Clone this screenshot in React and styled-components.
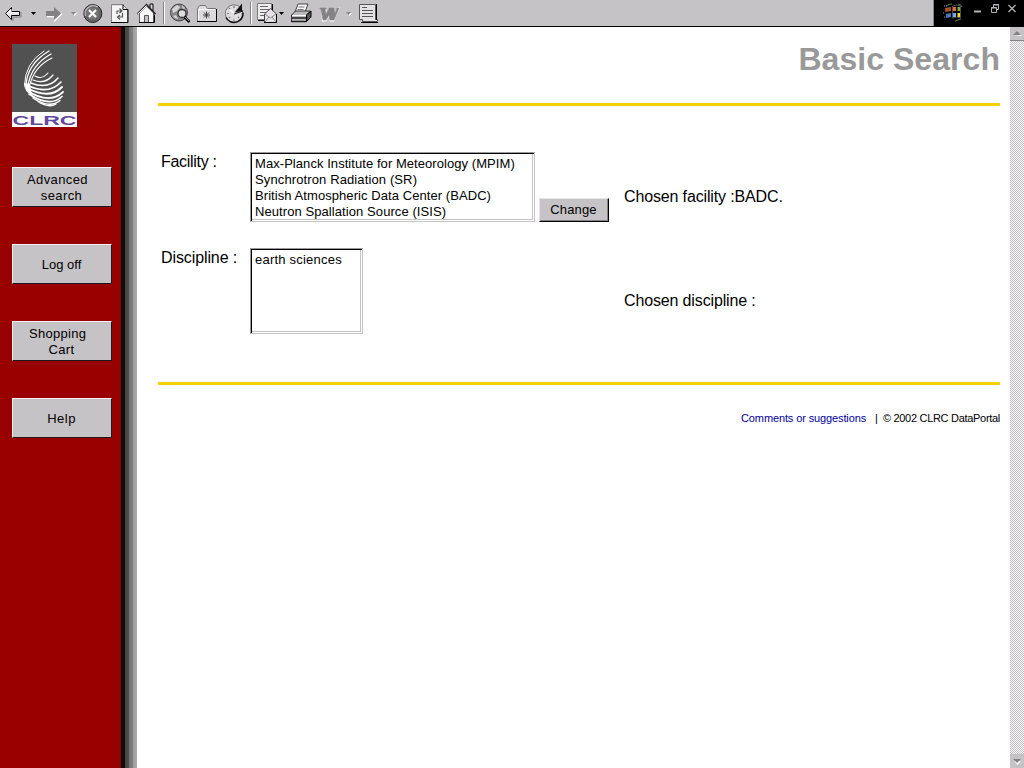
import React from "react";
import styled, { createGlobalStyle } from "styled-components";

const Global = createGlobalStyle`
  * { box-sizing: border-box; }
  body {
    margin: 0;
    background: #fff;
    color: #000;
    overflow: hidden;
    font-family: "Liberation Sans", Arial, sans-serif;
  }
`;

const Screen = styled.div`
  width: 1024px;
  height: 768px;
  display: flex;
  flex-direction: column;
`;

const Toolbar = styled.header`
  height: 27px;
  flex: none;
  display: flex;
  background: #c6c3c6;
  border-bottom: 1px solid #000;
`;

const Glyph = styled.svg`
  display: block;
  flex: none;
  height: 26px;
`;

const WindowControls = styled.div`
  width: 91px;
  height: 26px;
  margin-left: auto;
  background: #000;
  border-left: 1px solid #848284;
`;

const Body = styled.div`
  flex: 1;
  min-height: 0;
  display: flex;
`;

const Sidebar = styled.nav`
  width: 137px;
  flex: none;
  padding: 17px 0 0 12px;
  background: linear-gradient(
    to right,
    #990000 120px, #6a0000 121px,
    #100c08 121px, #100c08 125px,
    #444 125px, #505050 129px,
    #747474 129px, #808080 133px,
    #9c9c9c 133px, #adadad 137px
  );
`;

const Logo = styled.svg`
  display: block;
  width: 65px;
  height: 83px;
  margin-bottom: 40px;
`;

const NavButton = styled.button`
  display: flex;
  flex-direction: column;
  justify-content: center;
  align-items: center;
  width: 100px;
  height: 40px;
  margin: 0 0 37px;
  padding: 1px 1px 0 0;
  border: 1px solid;
  border-color: #f4f0f0 #201818 #201818 #f4f0f0;
  border-radius: 0;
  background: #c6c3c6;
  color: #000;
  font: 13px/16px "Liberation Sans", Arial, sans-serif;
  letter-spacing: ${(p) => p.$track || 0}px;
`;

const NavLine = styled.span`
  white-space: pre;
`;

const Main = styled.main`
  flex: 1;
  padding: 11px 10px 0 21px;
`;

const Title = styled.h1`
  margin: 0;
  height: 65px;
  text-align: right;
  color: #999;
  font-size: 32px;
  line-height: 42px;
  font-weight: bold;
  letter-spacing: ${(p) => p.$track}px;
`;

const Rule = styled.hr`
  margin: 0;
  height: 3px;
  border: 0;
  background: #f7d000;
`;

const SearchForm = styled.form`
  display: grid;
  grid-template-columns: 92px 374px 1fr;
  grid-template-rows: 96px 133px;
  padding-top: 46px;
  height: 276px;
`;

const Label = styled.label`
  padding-left: 3px;
  font-size: 16px;
  line-height: 20px;
  letter-spacing: ${(p) => p.$track}px;
`;

const Field = styled.div`
  display: flex;
  align-items: flex-end;
  align-self: start;
  gap: 4px;
`;

const ListBox = styled.ul`
  margin: 0;
  padding: 3px 0 0 4px;
  list-style: none;
  width: ${(p) => p.$w}px;
  height: ${(p) => p.$h}px;
  border: 1px solid;
  border-color: #9c9a9c #c6c3c6 #c6c3c6 #9c9a9c;
  box-shadow: inset 1px 1px 0 #000, inset -1px -1px 0 #fff, inset -2px -2px 0 #c6c3c6;
`;

const Option = styled.li`
  font-size: 13px;
  line-height: 16px;
  white-space: nowrap;
  letter-spacing: ${(p) => p.$track}px;
`;

const ChangeButton = styled.button`
  width: 70px;
  height: 24px;
  padding: 0 1px 1px 0;
  border: 1px solid;
  border-color: #e7e4e7 #000 #000 #e7e4e7;
  border-radius: 0;
  box-shadow: inset -1px -1px 0 #848284;
  background: #c6c3c6;
  color: #000;
  font: 13px/16px "Liberation Sans", Arial, sans-serif;
  letter-spacing: 0.15px;
`;

const Chosen = styled.p`
  margin: ${(p) => p.$top}px 0 0;
  font-size: 16px;
  line-height: 20px;
  white-space: nowrap;
  letter-spacing: ${(p) => p.$track}px;
`;

const Footer = styled.footer`
  display: flex;
  justify-content: flex-end;
  align-items: center;
  padding-top: 26px;
  font-size: 11px;
  line-height: 15px;
  white-space: pre;
`;

const FooterLink = styled.a`
  color: #00009c;
  letter-spacing: -0.12px;
`;

const Bar = styled.span`
  margin: 0 5px 0 9px;
`;

const Copyright = styled.span`
  letter-spacing: -0.3px;
`;

const ScrollBar = styled.div`
  width: 14px;
  flex: none;
  display: flex;
  flex-direction: column;
  justify-content: space-between;
  background: repeating-conic-gradient(#c0bec0 0 25%, #fff 0 50%) 0 0 / 2px 2px;
`;

const ScrollButton = styled.svg`
  display: block;
  width: 14px;
  height: 14px;
  background: #c6c3c6;
`;

function Icon({ x, w, children }) {
  return (
    <Glyph width={w} viewBox={`${x} 0 ${w} 26`}>
      {children}
    </Glyph>
  );
}

function Caret({ x, w, at, muted }) {
  return (
    <Icon x={x} w={w}>
      {muted && <path d={`M${at + 1} 13h5l-2.5 3z`} fill="#fff" />}
      <path d={`M${at} 12h5l-2.5 3z`} fill={muted ? "#848284" : "#000"} />
    </Icon>
  );
}

function Divider({ x, w, at }) {
  return (
    <Icon x={x} w={w}>
      <path d={`M${at + 0.5} 2v22`} stroke="#848284" />
      <path d={`M${at + 1.5} 2v22`} stroke="#fff" />
    </Icon>
  );
}

function ToolbarIcons() {
  return (
    <>
      <Icon x={0} w={24}>
        <path d="M6 14l7 7v-4h8v-5" fill="none" stroke="#848284" />
        <path d="M5.500 13.500l6-6v4h8v4h-8v4z" fill="#e7e4e7" stroke="#000" />
        <path d="M7 13.500l4-4v3h8" fill="none" stroke="#fff" />
      </Icon>
      <Caret x={24} w={18} at={31} />
      <Icon x={42} w={24}>
        <path d="M47 16.500h8v4l7-7" fill="none" stroke="#fff" strokeWidth="1.500" />
        <path d="M46 11h8V7l7 6.500-7 6.500v-4h-8z" fill="#848284" />
      </Icon>
      <Caret x={66} w={14} at={71} muted />
      <Icon x={80} w={26}>
        <circle cx="92.800" cy="13.500" r="9" fill="#666" stroke="#222" />
        <path d="M85.500 16a8 8 0 0 1 12-9" fill="none" stroke="#b5b2b5" strokeWidth="1.500" />
        <circle cx="92.500" cy="13.500" r="6" fill="#777" />
        <path d="M89 10l7 7m0-7l-7 7" stroke="#fff" strokeWidth="2" />
      </Icon>
      <Icon x={106} w={28}>
        <path d="M112 5.500h11l5 5v12h-16z" fill="#f4f4f4" />
        <path d="M111.500 22V4.500h11l5 5V22" fill="none" stroke="#848284" />
        <path d="M111 22.500h17v-13h-5v-5" fill="none" stroke="#000" />
        <path d="M117 14v-3h4m-1.500-2.500l2.500 2.500-2.500 2M122.500 13v4h-4m1.500-2l-2.500 2 2.500 2.500" fill="none" stroke="#555" strokeWidth="1.200" />
      </Icon>
      <Icon x={134} w={26}>
        <path d="M150 8V4h3v7" fill="#ddd" stroke="#000" />
        <path d="M139.500 13v9.500h14V13l-7-7z" fill="#f7f7f7" stroke="#555" />
        <path d="M137.500 14l9-9.500 9 9.500" fill="none" stroke="#222" strokeWidth="1.500" />
        <path d="M138 14l8.500-8.500" stroke="#fff" />
        <path d="M144.500 22v-6.500h4V22" fill="#c6c3c6" stroke="#555" />
        <path d="M139 22.500h15.500v-8" fill="none" stroke="#000" />
      </Icon>
      <Divider x={160} w={8} at={163} />
      <Icon x={168} w={26}>
        <circle cx="179" cy="12.500" r="8.500" fill="#888" stroke="#444" />
        <path d="M172 9l5-4 3 2-3 4-4 2zM173 16l3-1 2 4-3-1zM182 5l3 3-2 2z" fill="#d6d4d6" />
        <circle cx="182" cy="13.500" r="4" fill="#ddd" stroke="#333" strokeWidth="1.300" />
        <path d="M184.500 17l5 5" stroke="#000" strokeWidth="2.500" />
        <path d="M185 17l4 4" stroke="#aaa" />
      </Icon>
      <Icon x={194} w={26}>
        <path d="M198 21V8l2-3h6l2 3h8v13z" fill="#dcdadc" />
        <path d="M197.500 21V8.500l2-3h6l2 3H216" fill="none" stroke="#777" />
        <path d="M198.500 20V9.500H215" fill="none" stroke="#fff" />
        <path d="M197 21.500h19.500V9" fill="none" stroke="#000" />
        <path d="M206.500 11.500v7m-3.500-3.500h7m-6-2.500l5 5m0-5l-5 5" stroke="#333" strokeWidth=".9" />
      </Icon>
      <Icon x={220} w={30}>
        <circle cx="234" cy="13.500" r="8.700" fill="#dedcde" stroke="#777" />
        <path d="M226 17.500a9 9 0 0 0 17-5" fill="none" stroke="#111" strokeWidth="1.500" />
        <path d="M234.500 12.500l7.500-9v7.500z" fill="#111" />
        <path d="M234 14l9-3" stroke="#000" />
        <path d="M234 6v2m-7 5.500h2m5 6v2m7-7.500h1m-13-6l1 1m-1 9l1-1m8 0l1 1" stroke="#777" strokeWidth="1.200" />
        <path d="M234 13.500l-4-4" stroke="#fff" strokeWidth="1.500" />
      </Icon>
      <Divider x={250} w={4} at={250} />
      <Icon x={254} w={25}>
        <path d="M257.500 3.500h14v16h-14z" fill="#eee" stroke="#777" />
        <path d="M272.500 4v7M258 20.500h8" stroke="#000" />
        <path d="M260 6.500h8m-8 3h9m-9 3h6m-6 3h4" stroke="#666" />
        <path d="M264.500 14l6-5.500 6 5.500v8.500h-12z" fill="#e4e2e4" stroke="#444" />
        <path d="M265 14l5.500 4 5.500-4M265 22l4-5m7 5l-4-5" fill="none" stroke="#888" />
        <path d="M264 22.500h12.500V14" fill="none" stroke="#000" />
      </Icon>
      <Caret x={279} w={9} at={279} />
      <Icon x={288} w={28}>
        <path d="M295 12l3-8h10l-3 8z" fill="#f7f7f7" stroke="#444" />
        <path d="M298.500 7h6m-7 2.500h6" stroke="#777" />
        <path d="M291.500 15l4-4h15l-4 4v6.500h-15z" fill="#bbb" stroke="#333" />
        <path d="M306.500 15l4.500-4v6l-4.500 4.500z" fill="#555" stroke="#000" />
        <path d="M292 15.500h14" stroke="#fff" />
        <path d="M292 18h14m-15 3.500h15" stroke="#222" strokeWidth="1.500" />
      </Icon>
      <Icon x={316} w={26}>
        <path d="M321 8.500h5l1 6 3-6h4l1 6 3-6h-1v-1h3l-6 14h-4l-1-5-3 5h-4z" fill="#fff" />
        <path d="M320 8h6v1h-1l1 5 3-5v-1h5v1l1 5 2-5V8h2l-5 12h-4l-1-5-3 5h-3l-2-11h-1z" fill="#848284" stroke="#848284" strokeWidth=".6" />
      </Icon>
      <Caret x={342} w={12} at={346} muted />
      <Icon x={354} w={28}>
        <path d="M359.500 4.500h16v15h2v2h-15v-2h-3z" fill="#e4e2e4" stroke="#555" />
        <path d="M361 22.500h17M376.500 4v16" stroke="#000" />
        <path d="M362 7.500h5m-5 3h11m-11 3h11m-11 3h11" stroke="#555" />
      </Icon>
    </>
  );
}

function SystemIcons() {
  return (
    <svg width="90" height="26" viewBox="934 0 90 26">
      <path d="M944 6h3m-2 3h2m-4 4h2m-1 4h4" stroke="#3d6c96" strokeWidth="1.500" strokeDasharray="1 1" />
      <path d="M946 6q3-2 6-2m6 0q3 0 4 3m-1 12l-6 2" fill="none" stroke="#5c7b4c" />
      <path d="M952.500 6q4-2 8 0v12q-4-2-8 0z" fill="#000" stroke="#4d5148" />
      <path d="M945 8l6-1v4l-6 1z" fill="#a8502e" />
      <path d="M953 7h3v4h-3z" fill="#e66b38" />
      <path d="M957.500 7h2.500v4h-2.500z" fill="#74b33d" />
      <path d="M946 14l5-1v4l-5 1z" fill="#4b77bd" />
      <path d="M953 13h3v4h-3z" fill="#74a9e9" />
      <path d="M957.500 13h2.500v4h-2.500z" fill="#f4df32" />
      <path d="M974 11.500h7" stroke="#b5b2b5" strokeWidth="2" />
      <path d="M993.500 7V4.500h5v5H996M991.500 7.500h5v5h-5z" fill="none" stroke="#b5b2b5" />
      <path d="M993 5h6M991 8h6" stroke="#b5b2b5" />
      <path d="M1008.500 5l7 7m0-7l-7 7" stroke="#b5b2b5" strokeWidth="1.300" />
    </svg>
  );
}

function ClrcLogo() {
  return (
    <Logo viewBox="0 0 65 83">
      <path d="M0 0h65v68H0z" fill="#525152" />
      <path d="M0 68h65v15H0z" fill="#fff" />
      <g fill="none" stroke="#fff" strokeLinecap="round">
        <path d="M32 7Q13 19 12.500 41" strokeWidth="1" />
        <path d="M37 7Q15 20 14 42" strokeWidth="1.300" />
        <path d="M39 10Q19 21 16 42" strokeWidth="1.300" />
        <path d="M40 14Q23 22 18 40" strokeWidth="1.100" />
        <path d="M23 32Q30 36 36 29" strokeWidth="1.100" />
        <path d="M21 36Q33 41 41 31" strokeWidth="1.300" />
        <path d="M19 39Q36 46 46 34" strokeWidth="1.500" />
        <path d="M17 42Q37 51 49 38" strokeWidth="1.700" />
        <path d="M15 44Q38 56 50 43" strokeWidth="1.900" />
        <path d="M15 46.500Q37 61 51 48" strokeWidth="1.900" />
        <path d="M17 50Q38 64 50 52.500" strokeWidth="1.700" />
        <path d="M21 54Q37 65 48 56.500" strokeWidth="1.500" />
        <path d="M26 57.500Q37 64.500 44 60" strokeWidth="1.300" />
      </g>
      <path d="M12 39l6 1 2 12q-8-5-8-13z" fill="#fff" />
      <text
        x="0.500"
        y="80.500"
        fontFamily="Liberation Sans, Arial, sans-serif"
        fontSize="13.500"
        fontWeight="bold"
        fill="#634a9c"
        textLength="64"
        lengthAdjust="spacingAndGlyphs"
      >
        CLRC
      </text>
    </Logo>
  );
}

const facilities = [
  ["Max-Planck Institute for Meteorology (MPIM)", 0.06],
  ["Synchrotron Radiation (SR)", 0.12],
  ["British Atmospheric Data Center (BADC)", 0.07],
  ["Neutron Spallation Source (ISIS)", 0.08],
];

export default function App() {
  return (
    <Screen>
      <Global />
      <Toolbar>
        <ToolbarIcons />
        <WindowControls>
          <SystemIcons />
        </WindowControls>
      </Toolbar>
      <Body>
        <Sidebar>
          <ClrcLogo />
          <NavButton $track={0.4}>
            <NavLine>{"Advanced  "}</NavLine>
            <NavLine>search</NavLine>
          </NavButton>
          <NavButton><NavLine>Log off</NavLine></NavButton>
          <NavButton $track={0.3}>
            <NavLine>{"Shopping  "}</NavLine>
            <NavLine>Cart</NavLine>
          </NavButton>
          <NavButton $track={0.5}><NavLine>Help</NavLine></NavButton>
        </Sidebar>
        <Main>
          <Title $track={0.05}>Basic Search</Title>
          <Rule />
          <SearchForm>
            <Label $track={-0.3}>Facility :</Label>
            <Field>
              <ListBox $w={285} $h={70}>
                {facilities.map(([name, track]) => (
                  <Option key={name} $track={track}>{name}</Option>
                ))}
              </ListBox>
              <ChangeButton type="button">Change</ChangeButton>
            </Field>
            <Chosen $top={35} $track={-0.14}>Chosen facility :BADC.</Chosen>
            <Label $track={-0.1}>Discipline :</Label>
            <Field>
              <ListBox $w={113} $h={86}>
                <Option $track={0.22}>earth sciences</Option>
              </ListBox>
            </Field>
            <Chosen $top={43} $track={-0.14}>Chosen discipline :</Chosen>
          </SearchForm>
          <Rule />
          <Footer>
            <FooterLink>Comments or suggestions</FooterLink>
            <Bar>|</Bar>
            <Copyright>© 2002 CLRC DataPortal</Copyright>
          </Footer>
        </Main>
        <ScrollBar>
          <ScrollButton viewBox="0 0 14 14">
            <path d="M0 13.500h14" stroke="#848284" />
            <path d="M4 9h8l-1-1z" fill="#fff" />
            <path d="M3 8l4-4 4 4z" fill="#848284" />
          </ScrollButton>
          <ScrollButton viewBox="0 0 14 14">
            <path d="M4 7h7l-3.500 4z" fill="#fff" />
            <path d="M3 5h8l-4 4z" fill="#848284" />
          </ScrollButton>
        </ScrollBar>
      </Body>
    </Screen>
  );
}
